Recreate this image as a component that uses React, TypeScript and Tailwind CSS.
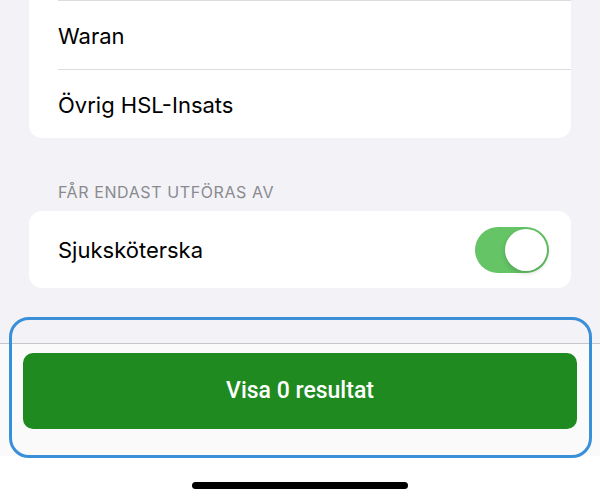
export default function App() {
  return (
    <div className="relative h-[503px] w-[600px] overflow-hidden bg-white font-['Inter',sans-serif]">
      {/* settings list */}
      <div className="h-[343px] bg-[#f2f2f7] px-[29px]">
        <div className="rounded-b-[13px] bg-white">
          <div className="ml-[29px] flex h-[70px] items-center border-t border-b border-[#dcdce0] pt-[3px] text-[22px] text-black">
            Waran
          </div>
          <div className="ml-[29px] flex h-[68px] items-center pt-[2px] text-[22px] text-black">
            Övrig HSL-Insats
          </div>
        </div>

        <div className="px-[29px] pt-[45px] pb-[10px] text-[16px] leading-[18px] tracking-[0.6px] text-[#8a8a8e] uppercase">
          Får endast utföras av
        </div>

        <div className="flex h-[77px] items-center justify-between rounded-[13px] bg-white pr-[22px] pl-[29px]">
          <span className="pt-[2px] text-[22px] text-black">Sjuksköterska</span>
          <div className="flex h-[46px] w-[74px] items-center justify-end rounded-full bg-[#65c466] pr-[2px]">
            <div className="h-[42px] w-[42px] rounded-full bg-white shadow-[0_2px_5px_rgba(0,0,0,0.18)]" />
          </div>
        </div>
      </div>

      {/* sticky footer with action */}
      <div className="h-[113px] border-t border-[#c6c6c8] bg-[#fafafa] px-[23px] pt-[9px]">
        <button className="flex h-[76px] w-full items-center justify-center rounded-[10px] bg-[#1f8a20] font-['Roboto',sans-serif] text-[23px] font-medium text-white">
          Visa 0 resultat
        </button>
      </div>

      <div className="flex justify-center pt-[26px]">
        <div className="h-[7px] w-[216px] rounded-full bg-black" />
      </div>

      {/* focus ring around the footer */}
      <div className="pointer-events-none absolute top-[317px] left-[9px] h-[141px] w-[583px] rounded-[20px] border-[3px] border-[#3a8fd9]" />
    </div>
  );
}
